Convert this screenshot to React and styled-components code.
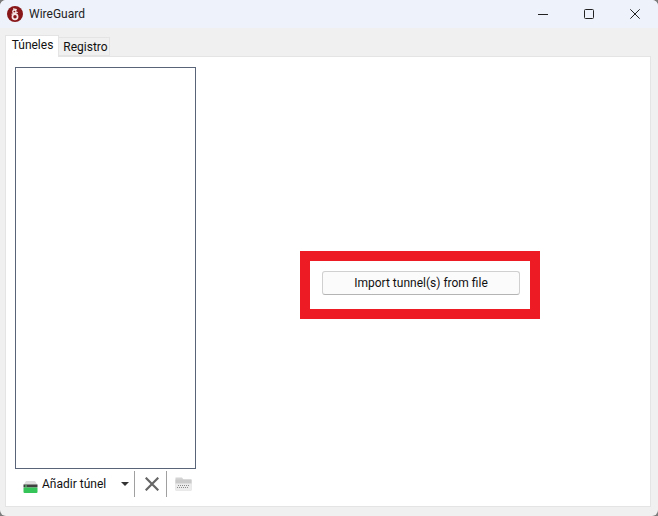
import React from 'react';
import styled, {createGlobalStyle} from 'styled-components';

const Global = createGlobalStyle`
  html, body {
    margin: 0;
    padding: 0;
    background: #7c7c7c;
  }
  body {
    font-family: Roboto, "Noto Sans", sans-serif;
    font-size: 12px;
    color: #111;
  }
`

const Window = styled.div`
  position: relative;
  width: 658px;
  height: 516px;
  display: flex;
  flex-direction: column;
  background: #f0f0f0;
  border-radius: 6px;
  overflow: hidden;
`

const TitleBar = styled.div`
  height: 28px;
  flex: none;
  display: flex;
  align-items: center;
  padding-left: 7px;
  background: #eef2fb;
`

const AppTitle = styled.span`
  margin-left: 6px;
  font-size: 12px;
  color: #222;
`

const WindowButtons = styled.div`
  margin-left: auto;
  display: flex;
`

const WindowButton = styled.div`
  width: 46px;
  height: 28px;
  display: flex;
  align-items: center;
  justify-content: center;
`

const TabStrip = styled.div`
  height: 28px;
  flex: none;
  display: flex;
  align-items: flex-end;
  padding-left: 5px;
  background: #f0f0f0;
`

const Tab = styled.div`
  box-sizing: border-box;
  display: flex;
  align-items: center;
  justify-content: center;
  width: ${p => p.$width}px;
  height: ${p => p.$active ? 22 : 19}px;
  border: 1px solid #e4e4e4;
  border-bottom: ${p => p.$active ? 'none' : '1px solid #e4e4e4'};
  border-left: ${p => p.$active ? '1px solid #e4e4e4' : 'none'};
  background: ${p => p.$active ? '#fff' : '#f0f0f0'};
  color: #111;
  padding-left: ${p => p.$active ? 1 : 3}px;
  padding-bottom: ${p => p.$active ? 3 : 0}px;
  margin-bottom: ${p => p.$active ? -1 : 0}px;
  position: relative;
`

const Panel = styled.div`
  box-sizing: border-box;
  margin: 0 7px 0 5px;
  height: 451px;
  flex: none;
  display: flex;
  padding: 10px 10px 10px 9px;
  background: #fff;
  border: 1px solid #e4e4e4;
`

const LeftColumn = styled.div`
  width: 181px;
  flex: none;
  display: flex;
  flex-direction: column;
`

const TunnelList = styled.div`
  box-sizing: border-box;
  height: 402px;
  flex: none;
  border: 1px solid #5a6478;
  background: #fff;
`

const Toolbar = styled.div`
  display: flex;
  align-items: center;
  height: 26px;
  margin-top: 2px;
`

const AddButton = styled.div`
  width: 119px;
  display: flex;
  align-items: center;
  padding-left: 8px;
  box-sizing: border-box;
  height: 100%;
`

const DiskSlot = styled.span`
  display: flex;
  margin-top: 5px;
`

const AddLabel = styled.span`
  margin-left: 4px;
  color: #111;
`

const Caret = styled.span`
  margin-left: auto;
  margin-right: 5px;
  width: 0;
  height: 0;
  border-left: 4px solid transparent;
  border-right: 4px solid transparent;
  border-top: 4px solid #333;
`

const ToolSep = styled.div`
  width: 1px;
  height: 26px;
  background: #a0a0a0;
  flex: none;
`

const ToolIcon = styled.div`
  width: ${p => p.$width}px;
  height: 100%;
  flex: none;
  display: flex;
  align-items: center;
  justify-content: center;
  padding-left: ${p => p.$shift}px;
  box-sizing: border-box;
`

const RightArea = styled.div`
  flex: 1;
  display: flex;
  align-items: center;
  justify-content: center;
  padding: 7px 0 0 4px;
`

const Highlight = styled.div`
  box-sizing: border-box;
  width: 240px;
  height: 68px;
  border: 10px solid #ed1c24;
  display: flex;
  align-items: center;
  justify-content: center;
  padding: 0 0 4px 2px;
  background: #fff;
`

const ImportButton = styled.button`
  box-sizing: border-box;
  width: 198px;
  height: 24px;
  padding: 0;
  border: 1px solid #d0d0d0;
  border-bottom-color: #b4b4b4;
  border-radius: 3px;
  background: #fbfbfb;
  font: inherit;
  color: #111;
`

const Logo = () => (
  <svg width="16" height="16" viewBox="0 0 16 16">
    <circle cx="8" cy="8" r="8" fill="#88171a" />
    <circle cx="8" cy="10.8" r="2.6" fill="none" stroke="#f6e6e6" strokeWidth="1.7" />
    <circle cx="7.4" cy="5.6" r="1.6" fill="none" stroke="#f6e6e6" strokeWidth="1.3" />
    <path d="M4.6 8.4 L10.8 6.2 M6 2.8 L9.8 3.6" stroke="#f6e6e6" strokeWidth="1.2" fill="none" />
  </svg>
)

const DiskIcon = () => (
  <svg width="15" height="12" viewBox="0 0 15 12">
    <path d="M3 0 H12 L14.5 4 H0.5 Z" fill="#dcdcdc" />
    <rect x="0.5" y="3.5" width="14" height="3" fill="#3f3f3f" />
    <rect x="0.5" y="6.5" width="14" height="5.5" rx="1" fill="#35c457" />
    <rect x="2" y="4.5" width="2" height="1" fill="#5fe07a" />
  </svg>
)

const FolderIcon = () => (
  <svg width="17" height="14" viewBox="0 0 17 14">
    <path d="M0.5 0.5 H7 L8.5 2.5 H16.5 V13.5 H0.5 Z" fill="#d4d4d4" />
    <rect x="0.5" y="2.5" width="16" height="4" fill="#cacaca" />
    <rect x="1" y="6.5" width="15" height="6.5" fill="#ececec" />
    <path d="M3 8.5 H15 M2 10.5 H14" stroke="#8a8a8a" strokeWidth="1" strokeDasharray="1 1" />
  </svg>
)

export default function App() {
  return (
    <Window>
      <Global />
      <TitleBar>
        <Logo />
        <AppTitle>WireGuard</AppTitle>
        <WindowButtons>
          <WindowButton>
            <svg width="10" height="10" viewBox="0 0 10 10"><path d="M0 5.5 H10" stroke="#222" strokeWidth="1" /></svg>
          </WindowButton>
          <WindowButton>
            <svg width="10" height="10" viewBox="0 0 10 10"><rect x="0.5" y="0.5" width="9" height="9" rx="1" fill="none" stroke="#222" /></svg>
          </WindowButton>
          <WindowButton>
            <svg width="10" height="10" viewBox="0 0 10 10"><path d="M0.3 0.3 L9.7 9.7 M9.7 0.3 L0.3 9.7" stroke="#222" strokeWidth="1" /></svg>
          </WindowButton>
        </WindowButtons>
      </TitleBar>
      <TabStrip>
        <Tab $active $width={54}>Túneles</Tab>
        <Tab $width={51}>Registro</Tab>
      </TabStrip>
      <Panel>
        <LeftColumn>
          <TunnelList />
          <Toolbar>
            <AddButton>
              <DiskSlot><DiskIcon /></DiskSlot>
              <AddLabel>Añadir túnel</AddLabel>
              <Caret />
            </AddButton>
            <ToolSep />
            <ToolIcon $width={31} $shift={2}>
              <svg width="14" height="14" viewBox="0 0 14 14"><path d="M0.7 0.7 L13.3 13.3 M13.3 0.7 L0.7 13.3" stroke="#666" strokeWidth="2.2" /></svg>
            </ToolIcon>
            <ToolSep />
            <ToolIcon $width={29} $shift={4}>
              <FolderIcon />
            </ToolIcon>
          </Toolbar>
        </LeftColumn>
        <RightArea>
          <Highlight>
            <ImportButton>Import tunnel(s) from file</ImportButton>
          </Highlight>
        </RightArea>
      </Panel>
    </Window>
  );
}
